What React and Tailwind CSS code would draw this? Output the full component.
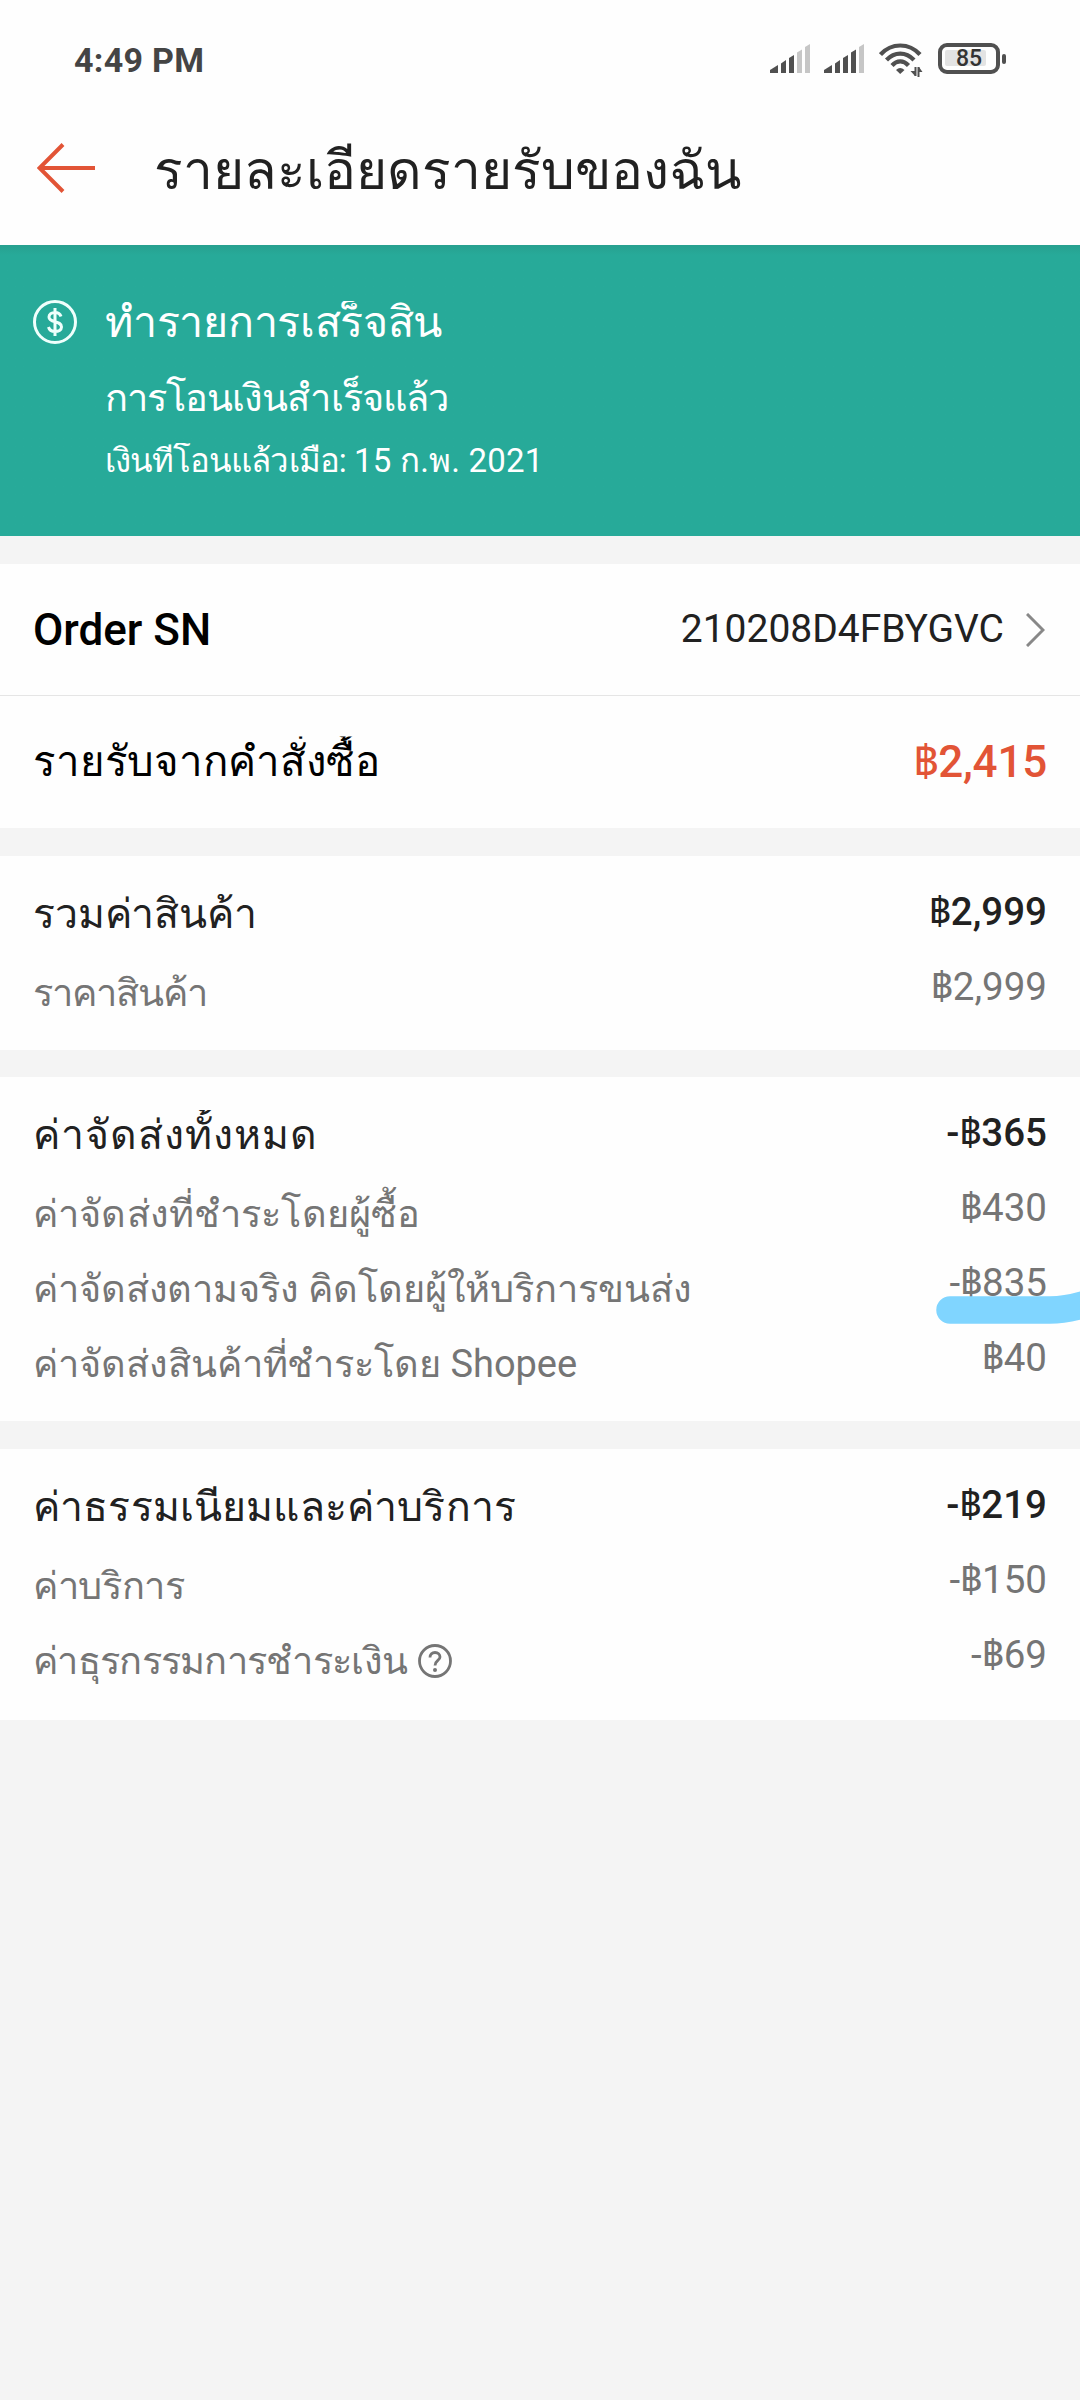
import React from 'react'

const feeSections = [
  {
    title: 'รวมค่าสินค้า',
    total: '฿2,999',
    box: 'mt-7 h-[194px]',
    spacing: 'tracking-[-0.15px]',
    rows: [{ label: 'ราคาสินค้า', amount: '฿2,999', spacing: 'tracking-[-1px]' }],
  },
  {
    title: 'ค่าจัดส่งทั้งหมด',
    total: '-฿365',
    box: 'mt-[27px] h-[344px]',
    spacing: 'tracking-[1px]',
    rows: [
      { label: 'ค่าจัดส่งที่ชำระโดยผู้ซื้อ', amount: '฿430', spacing: 'tracking-[0.15px]' },
      {
        label: 'ค่าจัดส่งตามจริง คิดโดยผู้ให้บริการขนส่ง',
        amount: '-฿835',
        spacing: 'tracking-[-0.1px]',
        marked: true,
      },
      { label: 'ค่าจัดส่งสินค้าที่ชำระโดย Shopee', amount: '฿40', spacing: 'tracking-[-0.05px]' },
    ],
  },
  {
    title: 'ค่าธรรมเนียมและค่าบริการ',
    total: '-฿219',
    box: 'mt-7 h-[271px]',
    spacing: 'tracking-[0.15px]',
    rows: [
      { label: 'ค่าบริการ', amount: '-฿150', spacing: 'tracking-[-0.35px]' },
      { label: 'ค่าธุรกรรมการชำระเงิน', amount: '-฿69', spacing: 'tracking-[-0.7px]', help: true },
    ],
  },
]

// The baht sign stays regular even where the digits are medium
function Amount({ value, className }) {
  const [sign, digits] = value.split('฿')
  return (
    <span className={className}>
      {sign}
      <span className="font-['Noto_Sans_Thai_Looped','Noto_Sans_Thai'] leading-none font-normal">฿</span>
      {digits}
    </span>
  )
}

function Signal({ active }) {
  const bars = ['M0 29V26L8 21V29Z', 'M11 29V19.5L16 16V29Z', 'M19 29V14L24 11V29Z', 'M27 29V8.500L32 5.500V29Z', 'M35 29V3L40 0V29Z']
  return (
    <svg width="40" height="29" viewBox="0 0 40 29">
      {bars.map((d, i) => (
        <path key={d} d={d} fill={i < active ? '#505050' : '#c6c6c6'} />
      ))}
    </svg>
  )
}

function StatusBar() {
  return (
    <div className="flex h-[100px] items-start justify-between pl-[74px] pr-[74px]">
      <span className="mt-[40px] text-[34px] leading-[40px] font-bold tracking-[0.3px] text-[#444]">4:49 PM</span>
      <div className="mt-[43px] flex items-start">
        <div className="mt-px flex gap-[14px]">
          <Signal active={3} />
          <Signal active={4} />
        </div>
        <svg className="ml-[15px]" width="44" height="35" viewBox="0 0 44 35" fill="none" stroke="#505050" strokeWidth="4.200">
          <path d="M1.500 11.500C12.500 -.5 30 -.5 41 11.500" />
          <path d="M7.500 17C15.500 8.500 27 8.500 35 17" />
          <path d="M13 22.500C18 17 24.500 17 29.500 22.500" />
          <path d="M17 27Q21 23 25.500 27L21.200 31Z" fill="#505050" stroke="none" />
          <path d="M36.500 24V33M39.500 34V24" strokeWidth="2" />
          <path d="M36 33L31.500 28H36ZM40 24L43.500 29H40Z" fill="#505050" stroke="none" />
        </svg>
        <div className="ml-[15px] flex items-center">
          <div className="relative flex h-[31px] w-[62px] items-center justify-center rounded-[9px] border-4 border-[#505050]">
            <div className="absolute left-[3px] top-[3px] h-[16px] w-[41px] rounded-xs bg-[#e3e3e3]" />
            <span className="relative text-[23px] leading-none font-medium text-[#333]">85</span>
          </div>
          <div className="ml-[2px] h-[10px] w-1 rounded-sm bg-[#505050]" />
        </div>
      </div>
    </div>
  )
}

function Header() {
  return (
    <header className="h-[245px] bg-[#fefefe]">
      <StatusBar />
      <div className="flex items-start pl-[37px]">
        <svg className="mt-[43px]" width="59" height="50" viewBox="0 0 59 50" fill="none" stroke="#e25436" strokeWidth="4">
          <path d="M58 25H3M26 1.500L2.500 25L26 48.500" />
        </svg>
        <h1 className="ml-[58px] mt-[36px] text-[53.3px] leading-[70px] text-[#212121]">รายละเอียดรายรับของฉัน</h1>
      </div>
    </header>
  )
}

function TransferBanner() {
  return (
    <section className="flex h-[291px] items-start bg-[#27aa99] bg-linear-to-b from-[#27a08f] to-[#27aa99] to-[10px] pl-[33px] text-white">
      <svg className="mt-[55px]" width="44" height="44" viewBox="0 0 44 44" fill="none" stroke="#effffc" strokeWidth="3">
        <circle cx="22" cy="22" r="20.500" />
        <path d="M28 16.500C27 13.500 24.500 12.500 22 12.500C18.500 12.500 16 14.500 16 17C16 23.500 28.500 20 28.500 27C28.500 30 25.500 31.500 22 31.500C18.500 31.500 16.300 30 15.500 27M22 8V36" />
      </svg>
      <div className="ml-[28px] mt-[51px]">
        <p className="h-[78px] text-[43px] leading-[52px] tracking-[-0.3px] [clip-path:inset(5px_0_0_0)]">ทำรายการเสร็จสิ้น</p>
        <p className="h-[67px] text-[38px] leading-[48px] tracking-[-0.95px]">การโอนเงินสำเร็จแล้ว</p>
        <p className="text-[33px] leading-[40px] tracking-[0.2px] [clip-path:inset(2px_0_0_0)]">
          <span className="tracking-[-0.95px]">เงินที่โอนแล้วเมื่อ:</span> 15 ก.พ. 2021
        </p>
      </div>
    </section>
  )
}

function OrderSummary() {
  return (
    <section className="mt-7 bg-[#fefefe]">
      <div className="flex h-[132px] items-center justify-between border-b border-[#e5e5e5] px-[33px]">
        <span className="text-[44px] font-medium text-black">Order SN</span>
        <div className="flex items-center">
          <span className="text-[39px] text-[#212121]">210208D4FBYGVC</span>
          <svg className="ml-[22px] mr-[2px]" width="19" height="34" viewBox="0 0 19 34" fill="none" stroke="#888" strokeWidth="3">
            <path d="M1 1L17 17L1 33" />
          </svg>
        </div>
      </div>
      <div className="flex h-[132px] items-center justify-between px-[33px] pb-px">
        <span className="text-[42px] leading-[60px] tracking-[-0.15px] text-black [clip-path:inset(5px_0_0_0)]">
          รายรับจากคำสั่งซื้อ
        </span>
        <Amount value="฿2,415" className="text-[44px] leading-[60px] font-medium tracking-[-0.2px] text-[#e25436]" />
      </div>
    </section>
  )
}

function FeeSection({ title, total, box, spacing, rows }) {
  return (
    <section className={`bg-[#fefefe] px-[33px] pt-[31px] ${box}`}>
      <div className="flex h-[75px] items-start justify-between text-[#212121]">
        <span className={`mt-[2px] text-[41px] leading-[50px] [clip-path:inset(0)] ${spacing}`}>{title}</span>
        <Amount value={total} className="text-[38.5px] leading-[50px] font-medium" />
      </div>
      {rows.map((row) => (
        <div key={row.label} className="relative flex h-[75px] items-start justify-between text-[#757575]">
          <div className="mt-[6px] flex items-center">
            <span className={`text-[38px] leading-[50px] ${row.spacing}`}>{row.label}</span>
            {row.help && (
              <svg className="-mt-px ml-[11px]" width="34" height="34" viewBox="0 0 34 34" fill="none" stroke="#757575" strokeWidth="2.800">
                <circle cx="17" cy="17" r="15.500" />
                <path d="M12 13.500C12 10.500 14.200 8.500 17 8.500C20 8.500 22 10.500 22 13C22 16.500 17 16.500 17 21.500" />
                <circle cx="17" cy="26" r="2" fill="#757575" stroke="none" />
              </svg>
            )}
          </div>
          <Amount value={row.amount} className="text-[38.5px] leading-[50px]" />
          {row.marked && (
            <svg className="absolute -right-[33px] top-[30px]" width="144" height="36" viewBox="0 0 144 36" fill="none">
              <path d="M14 22H114Q130 22 150 16" stroke="#80d5ff" strokeWidth="27.500" strokeLinecap="round" />
            </svg>
          )}
        </div>
      ))}
    </section>
  )
}

export default function App() {
  return (
    <div className="h-[2400px] w-[1080px] overflow-hidden bg-[#f4f4f4] font-[Roboto,'Liberation_Sans',sans-serif]">
      <Header />
      <TransferBanner />
      <OrderSummary />
      {feeSections.map((section) => (
        <FeeSection key={section.title} {...section} />
      ))}
    </div>
  )
}
